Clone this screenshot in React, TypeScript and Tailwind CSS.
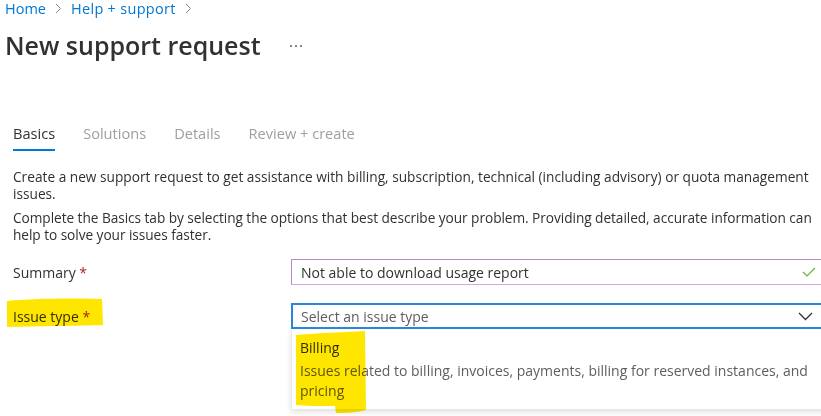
import React from "react";

const font = { fontFamily: '"Open Sans", "Noto Sans", sans-serif' };

export default function App() {
  return (
    <div
      className="relative w-[821px] h-[416px] overflow-hidden bg-white text-[#323130]"
      style={font}
    >
      {/* Breadcrumb */}
      <div className="flex items-center h-[17px] pl-[5px] text-[14.5px] leading-[17px] text-[#0078d4]">
        <span>Home</span>
        <svg className="mx-[9px]" width="7" height="11" viewBox="0 0 7 11">
          <path d="M1 1l4.5 4.5L1 10" fill="none" stroke="#8a8886" strokeWidth="1" />
        </svg>
        <span className="tracking-[0.3px]">Help + support</span>
        <svg className="ml-[9px]" width="7" height="11" viewBox="0 0 7 11">
          <path d="M1 1l4.5 4.5L1 10" fill="none" stroke="#8a8886" strokeWidth="1" />
        </svg>
      </div>

      {/* Title */}
      <div className="flex items-center mt-[13px] pl-[5px] h-[30px]">
        <h1 className="text-[25px] leading-[30px] font-semibold text-[#323130]">
          New support request
        </h1>
        <div className="ml-[29px] flex gap-[3px] items-center mt-[2px]">
          <span className="w-[2px] h-[2px] bg-[#605e5c] rounded-full" />
          <span className="w-[2px] h-[2px] bg-[#605e5c] rounded-full" />
          <span className="w-[2px] h-[2px] bg-[#605e5c] rounded-full" />
        </div>
      </div>

      {/* Tabs */}
      <div className="flex mt-[64px] pl-[13px] gap-[28px] text-[14.6px] leading-[19px]">
        <div className="flex flex-col">
          <span className="text-[#323130]">Basics</span>
          <span className="mt-[6px] h-[2px] bg-[#0078d4]" />
        </div>
        <span className="text-[#a19f9d]">Solutions</span>
        <span className="text-[#a19f9d]">Details</span>
        <span className="text-[#a19f9d]">Review + create</span>
      </div>

      {/* Description */}
      <div className="mt-[17px] pl-[13px] text-[13.7px] leading-[17px] text-[#323130] whitespace-nowrap">
        <p>
          Create a new support request to get assistance with billing, subscription, technical (including advisory) or quota management
          <br />
          issues.
        </p>
        <p className="mt-[7px] tracking-[-0.06px]">
          Complete the Basics tab by selecting the options that best describe your problem. Providing detailed, accurate information can
          <br />
          help to solve your issues faster.
        </p>
      </div>

      {/* Form */}
      <div className="mt-[16px] flex flex-col gap-[18px]">
        <div className="flex items-center">
          <label className="shrink-0 w-[291px] pl-[13px] text-[14px] text-[#323130]">
            Summary <span className="text-[#a4262c]">*</span>
          </label>
          <div className="shrink-0 flex items-center w-[540px] h-[26px] border border-[#b78acb] border-b-[#d3a9df] pl-[9px] pr-[14px] text-[14px] text-[#323130]">
            <span className="flex-1">Not able to download usage report</span>
            <svg width="14" height="10" viewBox="0 0 14 10">
              <path d="M1 5l4 4 8-8" fill="none" stroke="#6bb33e" strokeWidth="1.2" />
            </svg>
          </div>
        </div>
        <div className="relative flex items-center">
          <label className="shrink-0 w-[291px] pl-[13px] text-[14px] text-[#323130]">
            Issue type <span className="text-[#a4262c]">*</span>
          </label>
          <div className="shrink-0 flex items-center w-[540px] h-[26px] border-2 border-[#2b88d8] pl-[8px] pr-[16px] text-[14px] text-[#605e5c]">
            <span className="flex-1">Select an issue type</span>
            <svg width="15" height="9" viewBox="0 0 15 9">
              <path d="M1 1l6.5 6.5L14 1" fill="none" stroke="#323130" strokeWidth="1.3" />
            </svg>
          </div>

          {/* Dropdown */}
          <div className="absolute left-[291px] top-[27px] w-[540px] h-[79px] bg-white shadow-[0_3px_6px_rgba(0,0,0,0.12)] border-l border-[#edebe9] pl-[8px] pt-[8px] text-[14px]">
            <div className="leading-[20px] text-[#323130]">Billing</div>
            <div className="mt-[3px] leading-[20px] text-[#605e5c]">
              Issues related to billing, invoices, payments, billing for reserved instances, and
              <br />
              pricing
            </div>
          </div>
        </div>
      </div>

      {/* Highlighter marks */}
      <svg
        className="absolute left-0 top-0 mix-blend-multiply pointer-events-none"
        width="821"
        height="416"
        viewBox="0 0 821 416"
      >
        <path
          d="M7 301 C30 299 60 298 102 299 L103 325 C80 326 40 326 7 327 Z"
          fill="#ffe600"
        />
        <path
          d="M296 335 C320 333 345 332 365 331 L366 410 C355 413 345 413 336 413 L335 406 C320 406 305 406 296 405 Z"
          fill="#ffe600"
        />
      </svg>
    </div>
  );
}
